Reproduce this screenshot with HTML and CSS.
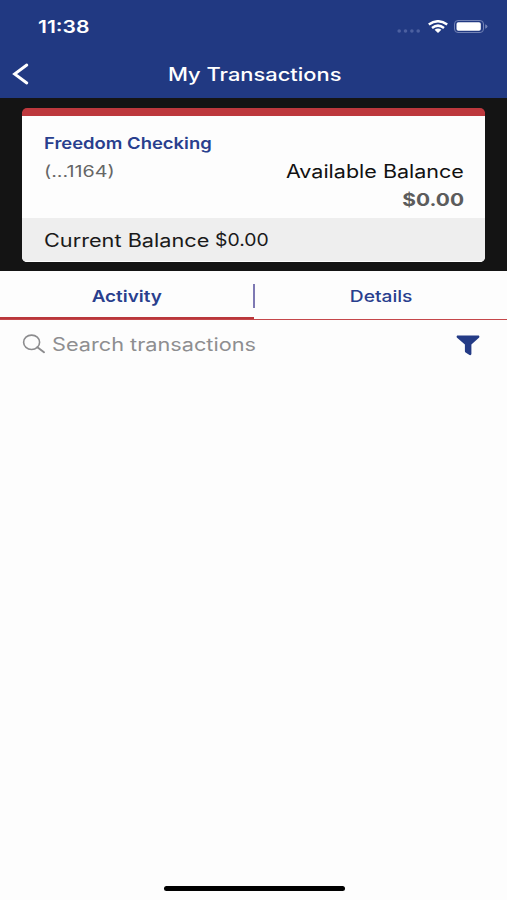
FILE: index.html
```html
<!DOCTYPE html>
<html lang="en">

<head>
	<meta charset="utf-8">
	<title>My Transactions</title>
	<link rel="stylesheet" href="styles.css">
</head>

<body>
	<header class="header">
		<div class="status-bar">
			<span class="text time">11:38</span>
			<div class="status-icons">
				<svg width="24" height="6" viewBox="0 0 24 6" fill="#4c60a0">
					<circle cx="2.2" cy="3" r="1.8" />
					<circle cx="8.5" cy="3" r="1.8" />
					<circle cx="14.9" cy="3" r="1.8" />
					<circle cx="21.2" cy="3" r="1.8" />
				</svg>
				<svg class="wifi" width="20" height="13" viewBox="0 0 20 13" fill="none" stroke="#fff" stroke-width="2.5">
					<path d="M.8 4.5Q10-2 19.2 4.5" />
					<path d="M4 7.9Q10 3.4 16 7.9" />
					<path d="M6.6 9.8Q10 7.4 13.4 9.8L10 13z" fill="#fff" stroke="none" />
				</svg>
				<svg class="battery" width="34" height="13" viewBox="0 0 34 13">
					<rect x=".5" y=".5" width="29" height="12" rx="3.5" fill="none" stroke="#7282b5" />
					<rect x="2.5" y="2.3" width="24.3" height="8.4" rx="1.8" fill="#fff" />
					<path d="M31.2 4.3Q33.5 5 33.5 6.5T31.2 8.7z" fill="#7282b5" />
				</svg>
			</div>
		</div>
		<div class="nav">
			<svg class="back" width="18" height="24" viewBox="0 0 18 24" fill="none" stroke="#fff" stroke-width="2.9">
				<path d="M14.8 3L2.6 12L14.8 21" stroke-linecap="round" stroke-linejoin="miter" />
			</svg>
			<h1 class="text title">My Transactions</h1>
		</div>
	</header>

	<section class="account">
		<div class="card">
			<div class="card-body">
				<h2 class="text account-name">Freedom Checking</h2>
				<div class="row">
					<span class="text account-number">(...1164)</span>
					<span class="text available">Available Balance</span>
				</div>
				<div class="text amount">$0.00</div>
			</div>
			<div class="card-footer">
				<span class="text current">Current Balance</span>
				<span class="text current-amount">$0.00</span>
			</div>
		</div>
	</section>

	<nav class="tabs">
		<div class="tab active"><span class="text activity">Activity</span></div>
		<div class="tab"><span class="text details">Details</span></div>
		<div class="divider"></div>
	</nav>

	<div class="search">
		<svg width="24" height="20" viewBox="0 0 24 20" fill="none" stroke="#8c8c8e" stroke-width="1.6">
			<ellipse cx="9.6" cy="8.3" rx="8" ry="7.2" />
			<path d="M15.4 13.2L22 18.2" stroke-width="2" stroke-linecap="round" />
		</svg>
		<span class="text placeholder">Search transactions</span>
		<svg class="filter" width="24" height="21" viewBox="0 0 24 21" fill="#243b86">
			<path d="M1.2.5H22.8Q23.8.8 23.2 2.6L15.4 9.5V19Q15.2 20.5 13.5 20L9.6 17.6Q8.9 17 8.9 16.2V9.5L.8 2.6Q.2.8 1.2.5z" />
		</svg>
	</div>

	<div class="home-bar"></div>
</body>

</html>
```

FILE: styles.css
```css
* {
	box-sizing: border-box;
}

body {
	background-color: #fdfdfd;
	font-family: Inter, "Liberation Sans", sans-serif;
	height: 900px;
	margin: 0;
	display: flex;
	flex-direction: column;
	overflow: hidden;
}

svg {
	display: block;
	flex-shrink: 0;
}

/* wide lettering */
.text {
	display: block;
	margin: 0;
	white-space: nowrap;
	transform: scaleX(1.2);
	transform-origin: left center;
}

.header {
	background-color: #213982;
	color: #fff;
	height: 98px;
}

.status-bar {
	display: flex;
	justify-content: space-between;
	align-items: center;
	height: 53px;
	padding: 0 19px 0 38px;
}

.time {
	font-size: 17px;
	font-weight: 600;
	line-height: 20px;
	transform: scaleX(1.24);
}

.status-icons {
	display: flex;
	align-items: center;
}

.status-icons svg:first-child {
	margin-top: 8px;
}

.wifi {
	margin-left: 7px;
}

.battery {
	margin-left: 6px;
}

.nav {
	display: flex;
	align-items: center;
	height: 42px;
	padding-left: 12px;
}

.title {
	font-size: 18px;
	font-weight: 500;
	margin-left: 138px;
	transform: scaleX(1.215);
}

.account {
	background-color: #141414;
	height: 173px;
	padding: 10px 22px 9px;
}

.card {
	background-color: #fdfdfd;
	border-radius: 5px;
	height: 154px;
	overflow: hidden;
	border-top: 8px solid #bd383d;
}

.card-body {
	height: 102px;
	padding: 16px 22px 0;
}

.account-name {
	color: #293f8e;
	font-size: 16px;
	font-weight: 600;
	line-height: 22px;
	transform: scaleX(1.152);
}

.row {
	display: flex;
	justify-content: space-between;
	align-items: center;
	height: 34px;
}

.account-number {
	color: #666;
	font-size: 16px;
	transform: scaleX(1.23);
}

.available {
	color: #111;
	font-size: 18px;
	margin-right: -1px;
	padding-top: 1px;
	transform: scaleX(1.195);
	transform-origin: right center;
}

.amount {
	color: #5c5c5c;
	font-size: 17px;
	font-weight: 700;
	line-height: 24px;
	margin-right: -1px;
	text-align: right;
	transform: scaleX(1.23);
	transform-origin: right center;
}

.card-footer {
	background-color: #eee;
	border-bottom: 1px solid #fdfdfd;
	color: #1a1a1a;
	display: flex;
	align-items: center;
	height: 44px;
	padding: 1px 0 0 22px;
}

.current {
	font-size: 18px;
	width: 171px;
	transform: scaleX(1.205);
}

.current-amount {
	font-size: 17px;
	transform: scaleX(1.14);
}

.tabs {
	border-bottom: 1px solid #c5474a;
	display: grid;
	grid-template-columns: 1fr 1fr;
	height: 49px;
	position: relative;
}

.tab {
	color: #293f8e;
	display: flex;
	align-items: center;
	justify-content: center;
	font-size: 16px;
	font-weight: 500;
	padding: 1px 0 0 1px;
}

.tab .text {
	transform-origin: center;
}

.tab.active {
	border-bottom: 2px solid #b9373b;
	font-weight: 600;
	padding-top: 3px;
}

.tab .activity {
	transform: scaleX(1.18);
}

.divider {
	background-color: #7e79b3;
	height: 24px;
	width: 2px;
	position: absolute;
	left: 253px;
	top: 13px;
}

.search {
	display: flex;
	align-items: center;
	height: 48px;
	padding: 0 27px 0 22px;
}

.placeholder {
	color: #8e8e90;
	font-size: 18px;
	margin-left: 6px;
	transform: scaleX(1.205);
}

.filter {
	margin: 2px 0 0 auto;
}

.home-bar {
	background-color: #000;
	border-radius: 3px;
	height: 5px;
	width: 181px;
	margin: auto auto 9px 164px;
}
```
